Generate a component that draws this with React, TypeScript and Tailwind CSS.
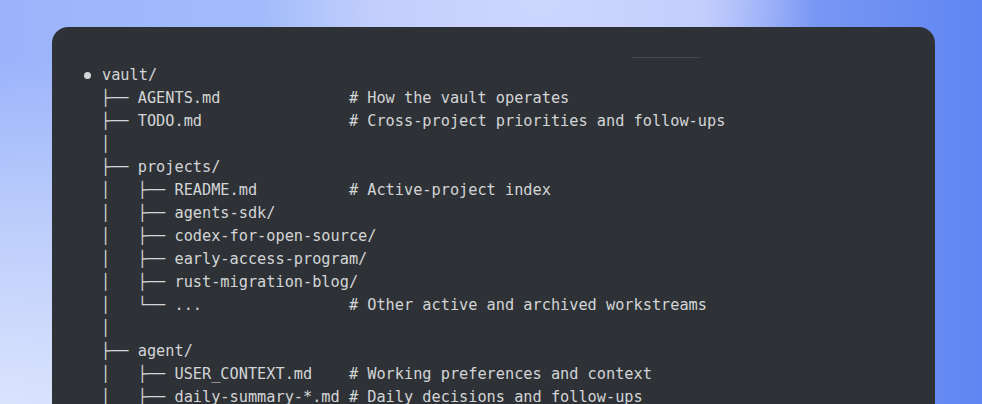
const rows: [string, string?][] = [
  ["├── AGENTS.md", "How the vault operates"],
  ["├── TODO.md", "Cross-project priorities and follow-ups"],
  ["│"],
  ["├── projects/"],
  ["│   ├── README.md", "Active-project index"],
  ["│   ├── agents-sdk/"],
  ["│   ├── codex-for-open-source/"],
  ["│   ├── early-access-program/"],
  ["│   ├── rust-migration-blog/"],
  ["│   └── ...", "Other active and archived workstreams"],
  ["│"],
  ["├── agent/"],
  ["│   ├── USER_CONTEXT.md", "Working preferences and context"],
  ["│   ├── daily-summary-*.md", "Daily decisions and follow-ups"],
];

const line = ([path, note]: [string, string?]) =>
  note ? `${path.padEnd(27, " ")}# ${note}` : path;

const App = () => {
  return (
    <div className="h-[404px] w-full overflow-hidden bg-[radial-gradient(ellipse_28%_60%_at_55%_0%,#cdd6fd_0%,#c3cefc_60%,transparent_100%),radial-gradient(ellipse_at_0%_100%,#dbe4fd_0%,#b9cbfb_35%,transparent_60%),linear-gradient(90deg,#9cb3fb_0%,#a4bffb_35%,#9aaaf8_62%,#7d9af4_80%,#5f86f2_100%)] pl-[52px] pr-[47px] pt-[27px]">
      <div className="relative h-full rounded-t-[16px] bg-[#2e3236] pt-[37px] font-['DejaVu_Sans_Mono',monospace] text-[15.25px] leading-[23px] text-[#d3d5d7]">
        <div className="absolute left-[580px] top-[30px] h-px w-[68px] bg-[#44484c]" />
        <div className="flex items-center pl-[32px]">
          <span className="mr-[11px] size-[7px] rounded-full bg-[#d3d5d7]" />
          <span>vault/</span>
        </div>
        <div className="pl-[49px]">
          {rows.map((r, i) => (
            <div key={i} className="whitespace-pre">
              {line(r)}
            </div>
          ))}
        </div>
      </div>
    </div>
  );
};

export default App;
